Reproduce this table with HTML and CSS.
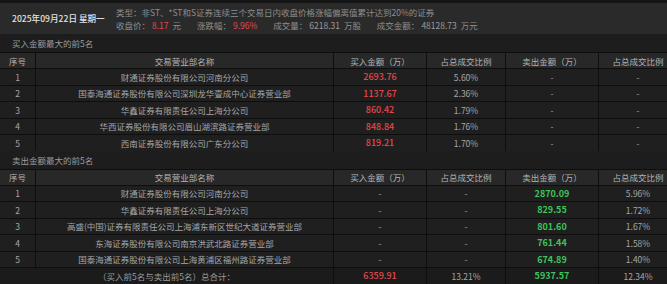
FILE: index.html
```html
<!DOCTYPE html>
<html lang="zh-CN">
<head>
<meta charset="utf-8">
<title>龙虎榜</title>
<link rel="stylesheet" href="styles.css">
</head>
<body>
<div class="page">
  <div class="topgap"></div>
  <div class="info">
    <div class="date">2025年09月22日 星期一</div>
    <div class="meta">
      <div class="meta-line">类型：非ST、*ST和S证券连续三个交易日内收盘价格涨幅偏离值累计达到20%的证券</div>
      <div class="meta-line stats">
        <span class="lbl">收盘价：</span><span class="val red">8.17</span><span class="unit">元</span>
        <span class="lbl">涨跌幅：</span><span class="val red">9.96%</span>
        <span class="lbl">成交量：</span><span class="val">6218.31</span><span class="unit">万股</span>
        <span class="lbl">成交金额：</span><span class="val">48128.73</span><span class="unit">万元</span>
      </div>
    </div>
  </div>

  <div class="section-title">买入金额最大的前5名</div>
  <div class="grid head">
    <div class="c">序号</div><div class="c">交易营业部名称</div><div class="c">买入金额（万）</div><div class="c">占总成交比例</div><div class="c">卖出金额（万）</div><div class="c">占总成交比例</div>
  </div>
  <div class="grid row"><div class="c">1</div><div class="c">财通证券股份有限公司河南分公司</div><div class="c num red">2693.76</div><div class="c">5.60%</div><div class="c">-</div><div class="c">-</div></div>
  <div class="grid row"><div class="c">2</div><div class="c">国泰海通证券股份有限公司深圳龙华壹成中心证券营业部</div><div class="c num red">1137.67</div><div class="c">2.36%</div><div class="c">-</div><div class="c">-</div></div>
  <div class="grid row"><div class="c">3</div><div class="c">华鑫证券有限责任公司上海分公司</div><div class="c num red">860.42</div><div class="c">1.79%</div><div class="c">-</div><div class="c">-</div></div>
  <div class="grid row"><div class="c">4</div><div class="c">华西证券股份有限公司眉山湖滨路证券营业部</div><div class="c num red">848.84</div><div class="c">1.76%</div><div class="c">-</div><div class="c">-</div></div>
  <div class="grid row"><div class="c">5</div><div class="c">西南证券股份有限公司广东分公司</div><div class="c num red">819.21</div><div class="c">1.70%</div><div class="c">-</div><div class="c">-</div></div>

  <div class="section-title">卖出金额最大的前5名</div>
  <div class="grid head">
    <div class="c">序号</div><div class="c">交易营业部名称</div><div class="c">买入金额（万）</div><div class="c">占总成交比例</div><div class="c">卖出金额（万）</div><div class="c">占总成交比例</div>
  </div>
  <div class="grid row"><div class="c">1</div><div class="c">财通证券股份有限公司河南分公司</div><div class="c">-</div><div class="c">-</div><div class="c num green">2870.09</div><div class="c">5.96%</div></div>
  <div class="grid row"><div class="c">2</div><div class="c">华鑫证券有限责任公司上海分公司</div><div class="c">-</div><div class="c">-</div><div class="c num green">829.55</div><div class="c">1.72%</div></div>
  <div class="grid row"><div class="c">3</div><div class="c">高盛(中国)证券有限责任公司上海浦东新区世纪大道证券营业部</div><div class="c">-</div><div class="c">-</div><div class="c num green">801.60</div><div class="c">1.67%</div></div>
  <div class="grid row"><div class="c">4</div><div class="c">东海证券股份有限公司南京洪武北路证券营业部</div><div class="c">-</div><div class="c">-</div><div class="c num green">761.44</div><div class="c">1.58%</div></div>
  <div class="grid row"><div class="c">5</div><div class="c">国泰海通证券股份有限公司上海黄浦区福州路证券营业部</div><div class="c">-</div><div class="c">-</div><div class="c num green">674.89</div><div class="c">1.40%</div></div>
  <div class="grid row total"><div class="c span2">（买入前5名与卖出前5名）总合计：</div><div class="c num red">6359.91</div><div class="c">13.21%</div><div class="c num green">5937.57</div><div class="c">12.34%</div></div>
</div>
</body>
</html>
```

FILE: styles.css
```css
html, body {
  margin: 0;
  padding: 0;
  background: #1c1c1c;
}
body {
  width: 667px;
  height: 284px;
  overflow: hidden;
  font-family: "Noto Sans CJK SC", "Noto Sans", sans-serif;
  font-size: 8.5px;
  color: #a6a6a6;
}
.page {
  width: 678px;
}
.topgap {
  height: 3px;
  background: #141414;
}
.info {
  height: 31px;
  background: #2a2a2a;
  display: flex;
  align-items: center;
}
.date {
  width: 104px;
  padding-left: 12px;
  color: #e2e2e2;
  font-weight: 500;
  font-size: 8.6px;
  margin-top: -2px;
}
.meta {
  display: flex;
  flex-direction: column;
  padding-top: 1px;
}
.meta-line {
  line-height: 13px;
  height: 13px;
  color: #8e8e8e;
  white-space: nowrap;
}
.stats .lbl {
  color: #8e8e8e;
}
.stats .val {
  margin-left: 2px;
  color: #9a9a9a;
}
.stats .unit {
  margin-left: 4px;
  margin-right: 14px;
}
.stats .val.red {
  margin-right: 14px;
}
.stats .val.red + .unit {
  margin-left: -10px;
}
.red { color: #e5484b !important; }
.green { color: #3dc55b !important; }

.section-title {
  height: 18px;
  line-height: 18px;
  padding-left: 12px;
  color: #9c9c9c;
  background: #1d1d1d;
}
.grid {
  display: grid;
  grid-template-columns: 36px 298px 93px 79px 93px 79px;
  box-sizing: border-box;
}
.grid .c {
  display: flex;
  align-items: center;
  justify-content: center;
  border-right: 1px solid #0e0e0e;
  white-space: nowrap;
  box-sizing: border-box;
}
.head {
  height: 16px;
  background: #282828;
  color: #b4b4b4;
  border-top: 1px solid #0e0e0e;
}
.row {
  height: 16.5px;
  background: #1f1f1f;
  border-top: 1px solid #0e0e0e;
}
.row .num {
  font-weight: 500;
  font-size: 9px;
}
.row .num.green {
  font-weight: 700;
}
.total {
  background: #1b1b1b;
}
.span2 {
  grid-column: span 2;
  color: #9a9a9a;
}
```
